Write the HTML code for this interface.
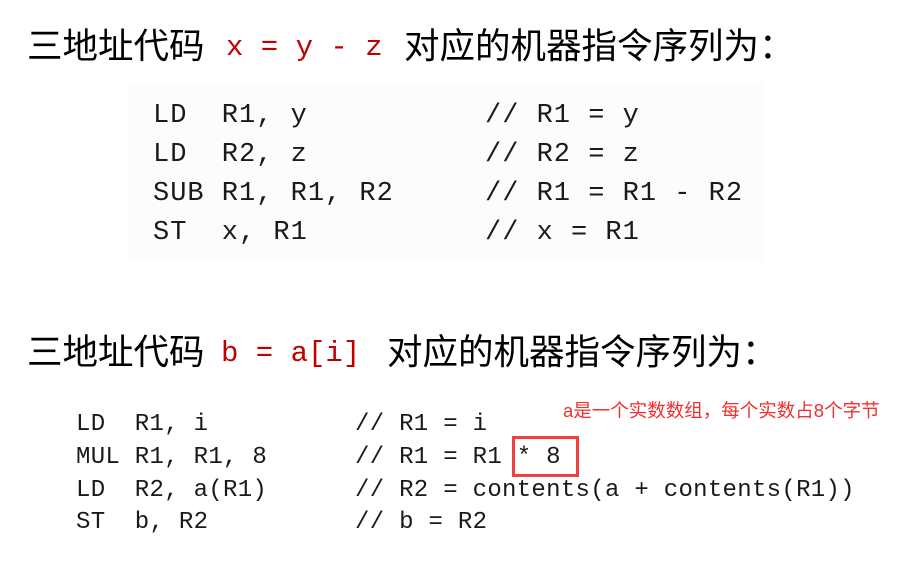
<!DOCTYPE html>
<html><head><meta charset="utf-8"><style>
body{margin:0;width:914px;height:572px;background:#fff;position:relative;overflow:hidden}
.h{position:absolute;font-family:"Liberation Sans","Noto Sans CJK SC",sans-serif;font-size:35.5px;color:#000;white-space:pre;line-height:40px}
.r{position:absolute;color:#c00000;font-family:"Liberation Mono",monospace;font-size:29px;white-space:pre;line-height:40px}
.c{position:absolute;font-family:"Liberation Mono","DejaVu Sans Mono",monospace;color:#1a1a1a;white-space:pre;line-height:30px}
.a{font-size:27px;letter-spacing:1px}
.b{font-size:24px;letter-spacing:0.3px}
</style></head><body>
<div class="h" style="left:27px;top:26px">三地址代码</div>
<div class="r" style="left:226px;top:28px">x = y - z</div>
<div class="h" style="left:404px;top:26px">对应的机器指令序列为：</div>
<div style="position:absolute;left:128px;top:82px;width:637px;height:180px;background:#fcfcfc"></div>
<div class="c a" style="left:153px;top:101px">LD  R1, y</div><div class="c a" style="left:485px;top:101px">// R1 = y</div>
<div class="c a" style="left:153px;top:140px">LD  R2, z</div><div class="c a" style="left:485px;top:140px">// R2 = z</div>
<div class="c a" style="left:153px;top:179px">SUB R1, R1, R2</div><div class="c a" style="left:485px;top:179px">// R1 = R1 - R2</div>
<div class="c a" style="left:153px;top:218px">ST  x, R1</div><div class="c a" style="left:485px;top:218px">// x = R1</div>
<div class="h" style="left:27px;top:332px">三地址代码</div>
<div class="r" style="left:221px;top:334px">b = a[i]</div>
<div class="h" style="left:387px;top:332px">对应的机器指令序列为：</div>
<div class="c b" style="left:76px;top:410px">LD  R1, i</div><div class="c b" style="left:355px;top:410px">// R1 = i</div>
<div class="c b" style="left:76px;top:443px">MUL R1, R1, 8</div><div class="c b" style="left:355px;top:443px">// R1 = R1 * 8</div>
<div class="c b" style="left:76px;top:476px">LD  R2, a(R1)</div><div class="c b" style="left:355px;top:476px">// R2 = contents(a + contents(R1))</div>
<div class="c b" style="left:76px;top:508px">ST  b, R2</div><div class="c b" style="left:355px;top:508px">// b = R2</div>
<div style="position:absolute;left:512px;top:436px;width:61px;height:35px;border:3px solid #f24040"></div>
<div style="position:absolute;left:563px;top:399px;font-family:'Liberation Sans','Noto Sans CJK SC',sans-serif;font-size:18.5px;color:#f03030;white-space:pre;line-height:24px">a是一个实数数组，每个实数占8个字节</div>
</body></html>
